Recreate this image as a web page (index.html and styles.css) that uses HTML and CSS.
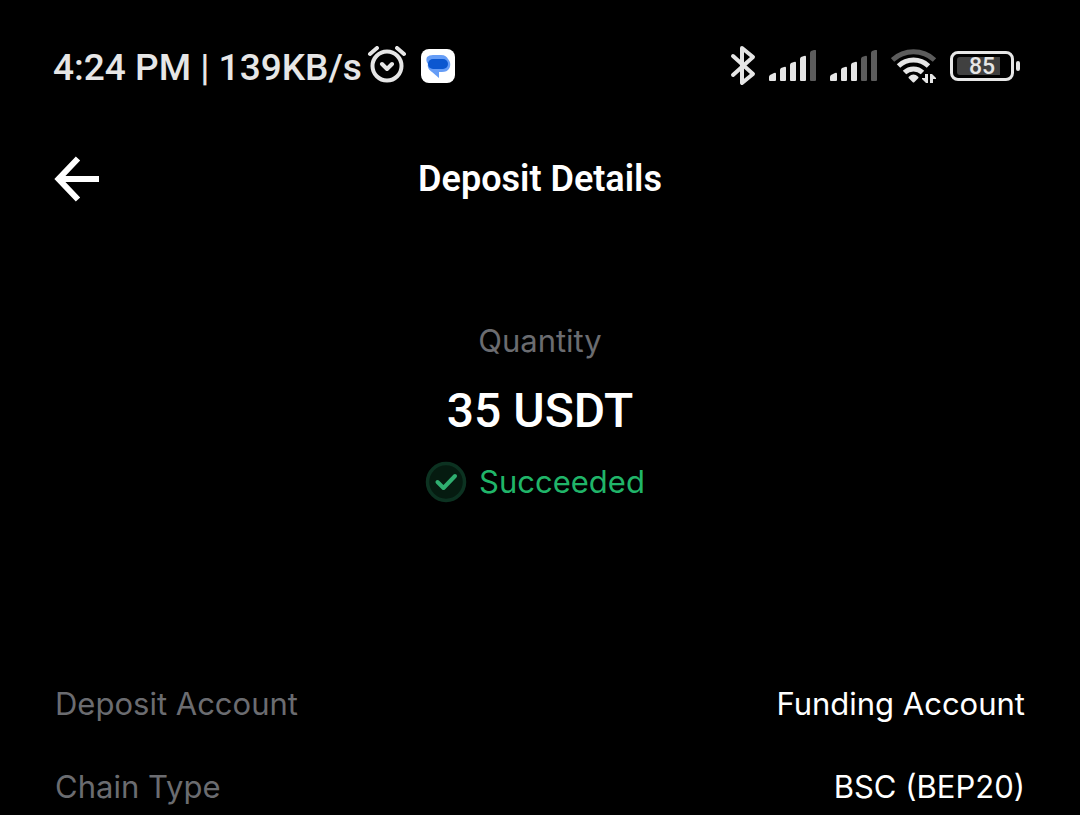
FILE: index.html
```html
<!DOCTYPE html>
<html lang="en">
  <head>
    <meta charset="UTF-8" />
    <meta name="viewport" content="width=device-width, initial-scale=1.0" />
    <title>Deposit Details</title>
    <link rel="stylesheet" href="styles.css">
  </head>
  <body>
    <div class="status-bar">
      <div class="status-bar__left">
        <span class="status-bar__text">4:24 PM | 139KB/s</span>
        <svg class="alarm" width="40" height="40" viewBox="0 0 40 40">
          <circle cx="20" cy="20" r="14.5" />
          <path d="M3 8l7-6M37 8l-7-6M15 18l5 5 5-5" />
        </svg>
        <svg width="34" height="34" viewBox="0 0 34 34">
          <rect width="34" height="34" rx="8" fill="#fff" />
          <path d="M12 6h8c4 0 6 2 7 4 3 3 3 8 0 11-2 2-5 2-9 2v6l-7-6C8 21 6 18 7 15 5 13 5 10 6 8q2-2 6-2z" fill="#669df6" />
          <rect x="7" y="10" width="20" height="10" rx="5" fill="#0b57d0" />
        </svg>
      </div>
      <div class="status-bar__right">
        <svg class="bluetooth" width="26" height="40" viewBox="0 0 26 40">
          <path d="M3 10l20 18-11 9V2l11 9L3 29" />
        </svg>
        <svg class="signal" width="48" height="32" viewBox="0 0 48 32">
          <path d="M0 30v-3q0-1 1-2l4-2q2-1 2 1v6q0 1-1 1H1q-1 0-1-1zM11 30V20q0-1 1-2l3-1q2-1 2 1v12q0 1-1 1h-4q-1 0-1-1zM21 30V15q0-1 1-2l3-1q2-1 2 1v17q0 1-1 1h-4q-1 0-1-1zM31 30V9q0-1 1-2l3-1q2-1 2 1v23q0 1-1 1h-4q-1 0-1-1z" />
          <path class="dim" d="M41 30V3q0-1 1-2l3-1q2-1 2 1v29q0 1-1 1h-4q-1 0-1-1z" />
        </svg>
        <svg class="signal" width="48" height="32" viewBox="0 0 48 32">
          <path d="M0 30v-3q0-1 1-2l4-2q2-1 2 1v6q0 1-1 1H1q-1 0-1-1zM11 30V20q0-1 1-2l3-1q2-1 2 1v12q0 1-1 1h-4q-1 0-1-1zM21 30V15q0-1 1-2l3-1q2-1 2 1v17q0 1-1 1h-4q-1 0-1-1z" />
          <path class="dim" d="M31 30V9q0-1 1-2l3-1q2-1 2 1v23q0 1-1 1h-4q-1 0-1-1zM41 30V3q0-1 1-2l3-1q2-1 2 1v29q0 1-1 1h-4q-1 0-1-1z" />
        </svg>
        <svg class="wifi" width="46" height="36" viewBox="0 0 46 36">
          <path class="wifi__dim" d="M1.500 12a31 31 0 0 1 42 0" />
          <path d="M7.500 18a22 22 0 0 1 30 0M13.500 24.500a13 13 0 0 1 18 0" />
          <path class="wifi__dot" d="M18.500 29.500q4-4 8 0l-4 4z" />
          <path class="wifi__arrows" d="M34 26h3v9h-2l-4-4v-1h3zM39 35v-9h2l4 4v1h-3v4z" />
        </svg>
        <div class="battery">
          <div class="battery__body">
            <div class="battery__level"></div>
            <span class="battery__value">85</span>
          </div>
          <div class="battery__tip"></div>
        </div>
      </div>
    </div>
    <header class="header">
      <button class="back" type="button" aria-label="Back">
        <svg width="46" height="46" viewBox="0 0 46 46">
          <path d="M24 2.500L4.500 23 24 43.500M4 23h41" />
        </svg>
      </button>
      <h1 class="title">Deposit Details</h1>
    </header>
    <main>
      <section class="summary">
        <p class="summary__label">Quantity</p>
        <p class="summary__amount">35 USDT</p>
        <p class="summary__status">
          <svg width="42" height="42" viewBox="0 0 42 42">
            <circle cx="21" cy="21" r="18.500" fill="#051b10" stroke="#0c3221" stroke-width="3.500" />
            <path d="M12.500 21l6 6L30 15" fill="none" stroke="#2fae70" stroke-width="4" stroke-linecap="round" stroke-linejoin="round" />
          </svg>
          Succeeded
        </p>
      </section>
      <dl class="details">
        <div class="row">
          <dt>Deposit Account</dt>
          <dd>Funding Account</dd>
        </div>
        <div class="row">
          <dt>Chain Type</dt>
          <dd>BSC (BEP20)</dd>
        </div>
      </dl>
    </main>
  </body>
</html>
```
FILE: styles.css
```css
:root {
  --icon-color: #e6e6e6;
  --dim-color: #5c5c5c;
  --label-color: #6b6c70;
  --green-color: #20b569;
}

* {
  box-sizing: border-box;
  margin: 0;
  padding: 0;
}
body {
  background-color: #000;
  color: #fff;
  font-family: Inter, sans-serif;
  font-size: 31px;
  line-height: 40px;
}
svg {
  display: block;
  flex-shrink: 0;
}

.status-bar {
  height: 132px;
  padding: 0 60px 0 53px;
  display: flex;
  align-items: center;
  justify-content: space-between;
  color: var(--icon-color);
  font-family: Roboto, sans-serif;
  font-size: 37px;
  font-weight: 500;
}
.status-bar__left {
  display: flex;
  align-items: center;
  gap: 5px;
}
.status-bar__text {
  padding-top: 4px;
}
.alarm {
  margin-right: 9px;
}
.status-bar__right {
  display: flex;
  align-items: center;
  gap: 13px;
}
.alarm,
.bluetooth,
.wifi {
  fill: none;
  stroke: var(--icon-color);
  stroke-width: 4;
  stroke-linecap: round;
  stroke-linejoin: round;
}
.signal {
  fill: var(--icon-color);
}
.signal .dim {
  fill: var(--dim-color);
}
.wifi {
  stroke-width: 5;
  stroke-linecap: butt;
}
.wifi__dim {
  stroke: var(--dim-color);
}
.wifi__dot {
  fill: var(--icon-color);
  stroke-width: 2;
}
.wifi__arrows {
  fill: var(--icon-color);
  stroke: none;
}
.battery {
  display: flex;
  align-items: center;
  gap: 2px;
}
.battery__body {
  position: relative;
  width: 64px;
  height: 30px;
  padding: 3px 4px;
  border: solid 3px var(--icon-color);
  border-radius: 8px;
}
.battery__level {
  width: 85%;
  height: 100%;
  border-radius: 3px 0 0 3px;
  background-color: #404040;
}
.battery__value {
  position: absolute;
  inset: 0;
  font-size: 23px;
  line-height: 26px;
  text-align: center;
}
.battery__tip {
  width: 4px;
  height: 10px;
  border-radius: 2px;
  background-color: var(--icon-color);
}

.header {
  height: 94px;
  padding: 0 54px;
  display: grid;
  grid-template-columns: 1fr auto 1fr;
  align-items: center;
}
.back {
  width: 46px;
  border: none;
  background: none;
  cursor: pointer;
}
.back path {
  fill: none;
  stroke: #fff;
  stroke-width: 6;
}
.title {
  font-family: Roboto, sans-serif;
  font-size: 36px;
  font-weight: 600;
}

.summary {
  padding: 95px 55px 0;
  display: flex;
  flex-direction: column;
  align-items: center;
}
.summary__label {
  color: var(--label-color);
}
.summary__amount {
  margin: 20px 0;
  font-family: Roboto, sans-serif;
  font-size: 48px;
  font-weight: 500;
  line-height: 60px;
}
.summary__status {
  padding-right: 10px;
  display: flex;
  align-items: center;
  gap: 12px;
  color: var(--green-color);
}

.details {
  margin-top: 181px;
  padding: 0 55px;
  display: flex;
  flex-direction: column;
  gap: 43px;
}
.row {
  display: flex;
  justify-content: space-between;
}
.row dt {
  color: var(--label-color);
}
```
